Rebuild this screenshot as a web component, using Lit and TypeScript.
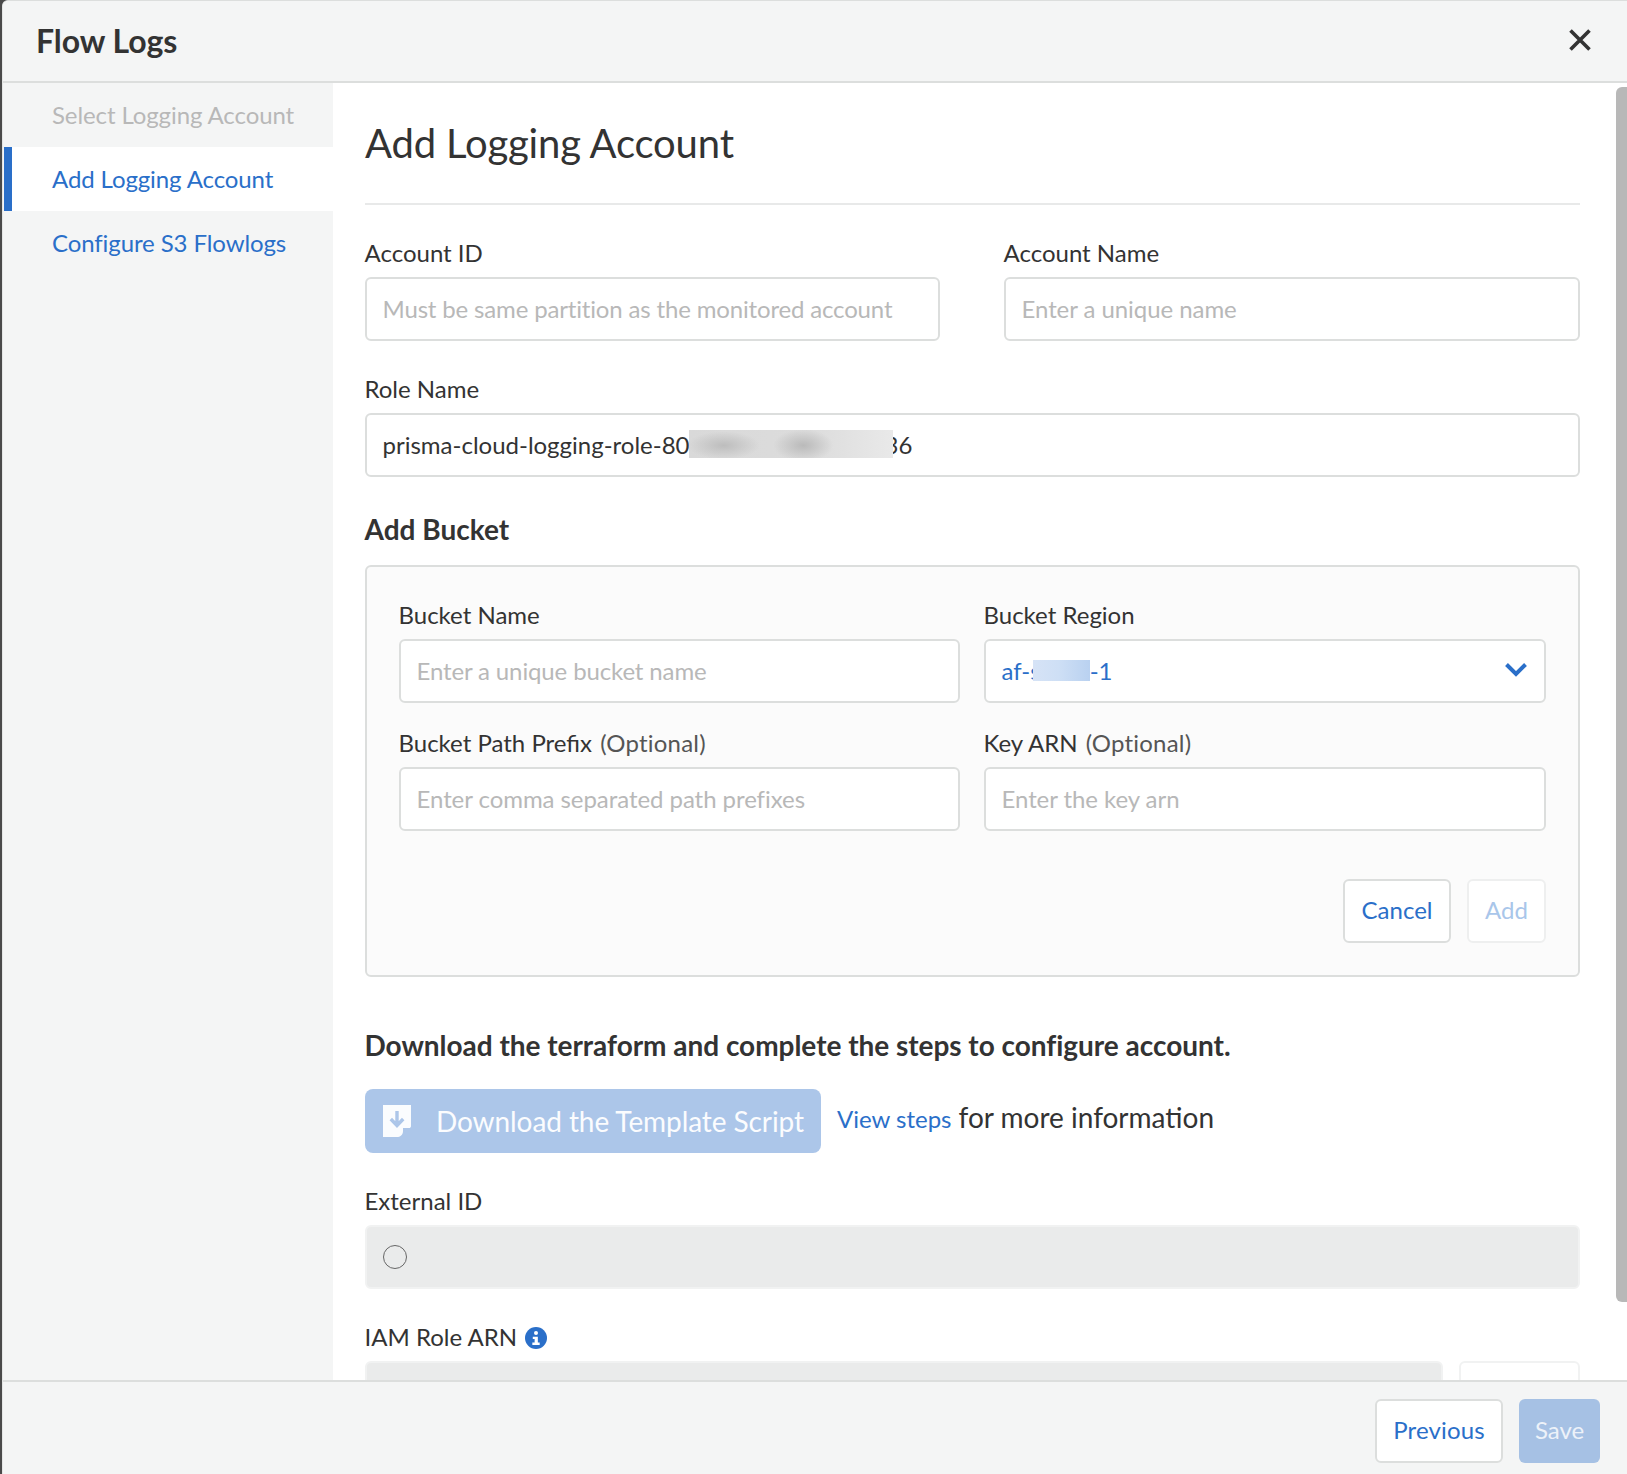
import { LitElement, html, css } from "lit";
import { customElement } from "lit/decorators.js";

@customElement("app-root")
export class AppRoot extends LitElement {
  static styles = css`
    :host { display: block; font-family: Lato, "Open Sans", sans-serif; color: #333; }
    * { box-sizing: border-box; }
    .page { width: 1627px; height: 1474px; background: #4a4a4a; position: relative; overflow: hidden; }
    .modal { position: absolute; inset: 0 0 0 2px; display: flex; flex-direction: column; background: #fff; border-top: 1px solid #dcdedd; border-left: 1px solid #e4e6e5; border-top-left-radius: 6px; overflow: hidden; }
    .head { height: 82px; flex: none; background: #f4f5f5; border-bottom: 2px solid #dcdedd; display: flex; align-items: center; justify-content: space-between; padding: 0 35px 2px 33px; }
    .head h1 { margin: 0; font-size: 32px; font-weight: 700; letter-spacing: -0.05px; color: #333; }
    .close { width: 24px; height: 24px; display: block; }
    .body { flex: 1; min-height: 0; display: flex; position: relative; overflow: hidden; }
    .side { width: 330px; flex: none; background: #f4f5f5; }
    .step { height: 64px; display: flex; align-items: center; padding: 0 0 1px 49px; font-size: 24px; color: #2a6fc9; letter-spacing: -0.1px; }
    .step.off { color: #b8b8b8; }
    .step.on { background: #fff; border-left: 8px solid #2a6fc9; margin-left: 1px; padding-left: 40px; }
    .main { flex: 1; padding: 0 47px 0 32px; overflow: hidden; }
    h2 { margin: 0; font-size: 40px; font-weight: 400; color: #333; height: 122px; line-height: 120px; border-bottom: 2px solid #e8e9e9; letter-spacing: -0.16px; }
    .row { display: grid; grid-template-columns: 575px 576px; column-gap: 64px; margin-top: 33px; }
    .field { display: block; }
    .label { display: block; font-size: 24px; line-height: 30px; height: 39px; color: #333; white-space: nowrap; text-indent: -0.5px; }
    .opt { color: #555; margin-left: 2px; letter-spacing: 0.2px; }
    .input { height: 64px; border: 2px solid #dcdedd; border-radius: 6px; background: #fff; display: flex; align-items: center; padding: 0 16px 2px 15.5px; font-size: 24px; color: #333; white-space: nowrap; }
    .ph { color: #b8b8b8; letter-spacing: -0.06px; }
    .ph.t1 { letter-spacing: -0.16px; }
    .ph.t2 { letter-spacing: -0.13px; }
    .role { margin-top: 33px; }
    .blur { display: inline-block; position: relative; z-index: 1; }
    .blur.gray { width: 204px; height: 28px; background: radial-gradient(ellipse 36px 14px at 17% 55%, #bdbdbd, transparent), radial-gradient(ellipse 30px 16px at 56% 55%, #bababa, transparent), linear-gradient(90deg, #d9d9d9, #dcdcdc 60%, #e9e9e9); margin: 0 -8px 0 -1px; }
    .blur.blue { width: 57px; height: 21px; background: linear-gradient(90deg, #d6e3f6 0%, #cedff5 45%, #b9d1f0 100%); margin-left: -8px; }
    h3 { margin: 0; font-size: 28px; font-weight: 700; color: #333; }
    .bh { margin-top: 34px; line-height: 36px; height: 54px; text-indent: -0.5px; }
    .box { height: 412px; border: 2px solid #dcdedd; border-radius: 6px; background: #fbfbfb; padding: 33px 32px 0; }
    .grid { display: grid; grid-template-columns: 561px 562px; column-gap: 24px; row-gap: 25px; }
    .blue { color: #2a6fc9; }
    .af { display: flex; align-items: center; }
    .between { justify-content: space-between; }
    .btns { display: flex; justify-content: flex-end; gap: 16px; margin-top: 48px; }
    .btn { height: 64px; border: 2px solid #dcdedd; border-radius: 6px; background: #fff; color: #2a6fc9; font-size: 24px; display: flex; align-items: center; justify-content: center; padding-bottom: 3px; }
    .btn.cancel { width: 108px; }
    .btn.add { width: 79px; color: #a9c6ea; border-color: #eeefef; }
    .dh { margin-top: 50px; line-height: 36px; height: 42px; letter-spacing: -0.03px; text-indent: -0.5px; }
    .dl { display: flex; align-items: center; margin-top: 20px; }
    .dbtn { width: 456px; height: 64px; border-radius: 8px; background: #acc6e9; color: #fbfcfe; font-size: 28px; letter-spacing: -0.08px; display: flex; align-items: center; padding-left: 18px; gap: 25px; }
    .vs { margin-left: 16px; padding-bottom: 6px; font-size: 24px; color: #2a6fc9; }
    .fm { margin-left: 7px; padding-bottom: 8px; font-size: 28px; color: #333; }
    .ext { margin-top: 33px; }
    .dis { background: #eaebeb; border-color: #f1f2f2; }
    .spin { width: 24px; height: 24px; margin-top: 2px; border: 1.5px solid #666; border-radius: 50%; }
    .iam { margin-top: 33px; }
    .info { display: inline-block; vertical-align: -3px; margin-left: 2px; }
    .iamrow { display: grid; grid-template-columns: 1078px 121px; column-gap: 16px; }
    .white { background: #fff; border-color: #f1f2f2; }
    .bar { position: absolute; right: 0; top: 4px; width: 11px; height: 1215px; background: #b8b8b8; border-radius: 6px 0 0 6px; }
    .foot { height: 94px; flex: none; background: #f4f5f5; border-top: 2px solid #dcdedd; display: flex; justify-content: flex-end; gap: 16px; padding: 17px 27px 0 0; }
    .btn.prev { width: 128px; letter-spacing: 0.15px; }
    .btn.save { width: 81px; background: #a6c1e4; border: none; color: #edf2f9; }
  `;

  render() {
    return html`<div class="page"><div class="modal">
      <div class="head">
        <h1>Flow Logs</h1>
        <svg class="close" viewBox="0 0 24 24"><path d="M2.5 2.5 L21.5 21.5 M21.5 2.5 L2.5 21.5" stroke="#333" stroke-width="3.6" fill="none"/></svg>
      </div>
      <div class="body">
        <div class="side">
          <div class="step off">Select Logging Account</div>
          <div class="step on">Add Logging Account</div>
          <div class="step">Configure S3 Flowlogs</div>
        </div>
        <div class="main">
          <h2>Add Logging Account</h2>
          <div class="row">
            <div class="field"><span class="label">Account ID</span><div class="input"><span class="ph t1">Must be same partition as the monitored account</span></div></div>
            <div class="field"><span class="label">Account Name</span><div class="input"><span class="ph">Enter a unique name</span></div></div>
          </div>
          <div class="field role"><span class="label">Role Name</span>
            <div class="input">prisma-cloud-logging-role-80<span class="blur gray"></span>36</div></div>
          <h3 class="bh">Add Bucket</h3>
          <div class="box">
            <div class="grid">
              <div class="field"><span class="label">Bucket Name</span><div class="input"><span class="ph t2">Enter a unique bucket name</span></div></div>
              <div class="field"><span class="label">Bucket Region</span>
                <div class="input between"><span class="blue af">af-s<span class="blur blue"></span>-1</span>
                  <svg width="24" height="16" viewBox="0 0 24 16"><path d="M2.5 2.5 L12 12 L21.5 2.5" stroke="#2a6fc9" stroke-width="4" fill="none"/></svg></div></div>
              <div class="field"><span class="label">Bucket Path Prefix <span class="opt">(Optional)</span></span><div class="input"><span class="ph">Enter comma separated path prefixes</span></div></div>
              <div class="field"><span class="label">Key ARN <span class="opt">(Optional)</span></span><div class="input"><span class="ph">Enter the key arn</span></div></div>
            </div>
            <div class="btns"><div class="btn cancel">Cancel</div><div class="btn add">Add</div></div>
          </div>
          <h3 class="dh">Download the terraform and complete the steps to configure account.</h3>
          <div class="dl">
            <div class="dbtn">
              <svg width="28" height="32" viewBox="0 0 28 32"><path d="M0 0 H28 V21 C28 22.500 27 23 26 23 H20 V26 C20 30 17 32 14 32 H0 Z" fill="#fafcfe"/><path d="M14 6 V20 M7.800 14 L14 20.500 L20.200 14" stroke="#acc6e9" stroke-width="3.4" fill="none"/></svg>
              Download the Template Script
            </div>
            <span class="vs">View steps</span><span class="fm">for more information</span>
          </div>
          <div class="field ext"><span class="label">External ID</span><div class="input dis"><div class="spin"></div></div></div>
          <div class="field iam"><span class="label">IAM Role ARN <svg class="info" width="22" height="22" viewBox="0 0 24 24"><circle cx="12" cy="12" r="12" fill="#2a6fc9"/><circle cx="12" cy="6.500" r="2.200" fill="#fff"/><path d="M8.500 10.500 H14 V17 H16 V19.500 H8 V17 H10.500 V13 H8.500 Z" fill="#fff"/></svg></span>
            <div class="iamrow"><div class="input dis"></div><div class="input white"></div></div></div>
        </div>
        <div class="bar"></div>
      </div>
      <div class="foot"><div class="btn prev">Previous</div><div class="btn save">Save</div></div>
    </div></div>`;
  }
}
